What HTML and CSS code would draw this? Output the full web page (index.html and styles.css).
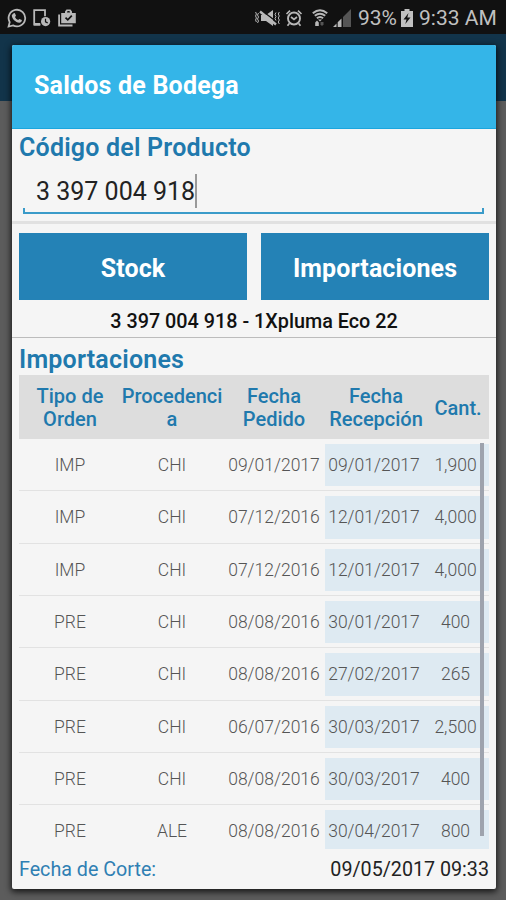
FILE: index.html
```html
<!DOCTYPE html>
<html lang="es">
<head>
    <meta charset="UTF-8">
    <meta name="viewport" content="width=device-width, initial-scale=1.0">
    <title>Saldos de Bodega</title>
    <link rel="stylesheet" href="styles.css">
</head>
<body>
    <div class="status-bar">
        <svg class="icon-whatsapp" width="20" height="20" viewBox="0 0 20 20">
            <path d="M2.7 14.2A8.3 8.3 0 1 1 6 17.4L1.6 18.5Z" fill="none" stroke="#b8b8b8" stroke-width="1.8"/>
            <path d="M6.2 5.4l1.6-.3 1.2 2.7-1 1.2c.7 1.5 1.8 2.5 3.2 3.1l1.1-1.2 2.6 1.2c.1 1.6-1.2 2.6-2.6 2.6-3.8-.3-7.6-4.2-7.5-7.5z" fill="#b8b8b8"/>
        </svg>
        <svg class="icon-device" width="18" height="18" viewBox="0 0 18 18">
            <path d="M7.5 15.5H1.2V1.2H12v6" fill="none" stroke="#b8b8b8" stroke-width="1.8"/>
            <path d="M1 14h6v2.5H1z" fill="#b8b8b8"/>
            <circle cx="12.6" cy="12.6" r="4.6" fill="#b8b8b8"/>
            <path d="M12.5 9.8v3l2.2 1.1" fill="none" stroke="#111" stroke-width="1.2"/>
        </svg>
        <svg class="icon-case" width="18" height="18" viewBox="0 0 18 18">
            <path d="M1.1 5.5v11h13.4" fill="none" stroke="#b8b8b8" stroke-width="1.8"/>
            <path d="M3.2 4H7V2.5l1.5-2h4l1.5 2V4h3.800v10.300H3.200zM9 3.600h3L11.500 2h-2z" fill="#b8b8b8" fill-rule="evenodd"/>
            <path d="M7.5 8.6l2.300 2.300 4-4.200" fill="none" stroke="#111" stroke-width="1.7"/>
        </svg>
        <span class="spacer"></span>
        <svg class="icon-mute" width="26" height="18" viewBox="0 0 26 18">
            <path d="M6 6h5l7-5v16l-7-5H6z" fill="#b8b8b8"/>
            <path d="M8 2.5L20.500 12" stroke="#111" stroke-width="1.5"/>
            <path d="M5 2.5l16 13" stroke="#b8b8b8" stroke-width="2.4"/>
            <path d="M3.5 4l-1 2 1 2-1 2 1 2-1 2M21 3.5l-1 2 1 2-1 2 1 2M24.3 3l-1 2 1 2-1 2 1 2-1 2 1 2M.6 3l.8 2-.8 2 .8 2-.8 2 .8 2" fill="none" stroke="#b8b8b8" stroke-width="1"/>
        </svg>
        <svg class="icon-alarm" width="18" height="18" viewBox="0 0 18 18">
            <circle cx="9" cy="9.5" r="6" fill="none" stroke="#b8b8b8" stroke-width="1.9"/>
            <path d="M1.5 5L5 1.700M16.500 5L13 1.700M4.300 14.500l-1.800 2.300M13.700 14.500l1.800 2.300M6 8l3 2.500L12 8" fill="none" stroke="#b8b8b8" stroke-width="1.7"/>
        </svg>
        <svg class="icon-wifi" width="16" height="18" viewBox="0 0 16 18">
            <path d="M.8 4.300Q8-1.800 15.200 4.300M2.800 6.800Q8 2.600 13.200 6.800M4.900 9.300Q8 6.800 11.100 9.300" fill="none" stroke="#b8b8b8" stroke-width="2"/>
            <path d="M6 10.500h4l-2 2z" fill="#b8b8b8"/>
            <path d="M3.200 17v-3.500l1.800-2 1.800 2V17z" fill="#b8b8b8"/>
            <path d="M8.500 13h3v2.500L10 17l-1.500-1.500z" fill="#555"/>
        </svg>
        <svg class="icon-signal" width="18" height="18" viewBox="0 0 18 18">
            <path d="M10 18V8l8-8v18z" fill="#555"/>
            <path d="M0 18l3.500-3.500V18zM4.700 18v-4.700L8.500 9.500V18z" fill="#b8b8b8"/>
        </svg>
        <span class="battery-level">93%</span>
        <svg class="icon-battery" width="12" height="18" viewBox="0 0 12 18">
            <path d="M3.500 0h5v2H12v16H0V2h3.500z" fill="#c0c0c0"/>
            <path d="M7.500 4l-5 6.500h3L4.300 15l5.200-6.500H6.300z" fill="#111"/>
        </svg>
        <span class="clock">9:33 AM</span>
    </div>
    <div class="app-bar"></div>

    <div class="dialog">
        <h1 class="dialog-title">Saldos de Bodega</h1>
        <div class="search">
            <h2 class="label">Código del Producto</h2>
            <div class="field">
                <span class="field-value">3 397 004 918</span><span class="cursor"></span>
            </div>
        </div>
        <div class="buttons">
            <button>Stock</button>
            <button>Importaciones</button>
        </div>
        <p class="product">3 397 004 918 - 1Xpluma Eco 22</p>
        <h2 class="label section">Importaciones</h2>
        <div class="table-head">
            <span>Tipo de Orden</span>
            <span>Procedencia</span>
            <span>Fecha Pedido</span>
            <span>Fecha Recepción</span>
            <span>Cant.</span>
        </div>
        <div class="list">
            <div class="row"><span>IMP</span><span>CHI</span><span>09/01/2017</span><span class="hl">09/01/2017</span><span class="hl cant">1,900</span></div>
            <div class="row"><span>IMP</span><span>CHI</span><span>07/12/2016</span><span class="hl">12/01/2017</span><span class="hl cant">4,000</span></div>
            <div class="row"><span>IMP</span><span>CHI</span><span>07/12/2016</span><span class="hl">12/01/2017</span><span class="hl cant">4,000</span></div>
            <div class="row"><span>PRE</span><span>CHI</span><span>08/08/2016</span><span class="hl">30/01/2017</span><span class="hl cant">400</span></div>
            <div class="row"><span>PRE</span><span>CHI</span><span>08/08/2016</span><span class="hl">27/02/2017</span><span class="hl cant">265</span></div>
            <div class="row"><span>PRE</span><span>CHI</span><span>06/07/2016</span><span class="hl">30/03/2017</span><span class="hl cant">2,500</span></div>
            <div class="row"><span>PRE</span><span>CHI</span><span>08/08/2016</span><span class="hl">30/03/2017</span><span class="hl cant">400</span></div>
            <div class="row"><span>PRE</span><span>ALE</span><span>08/08/2016</span><span class="hl">30/04/2017</span><span class="hl cant">800</span></div>
            <div class="scrollbar"></div>
        </div>
        <div class="footer">
            <span class="footer-label">Fecha de Corte:</span>
            <span>09/05/2017 09:33</span>
        </div>
    </div>
</body>
</html>
```
FILE: styles.css
```css
* {
    box-sizing: border-box;
}
body {
    margin: 0;
    height: 900px;
    position: relative;
    overflow: hidden;
    background: #5c5c5c;
    font-family: Roboto, sans-serif;
}
h1, h2, p {
    margin: 0;
}
.status-bar {
    height: 34px;
    padding: 2px 9px 0 7px;
    display: flex;
    align-items: center;
    background: #111;
    color: #c0c0c0;
    font-size: 21px;
    white-space: nowrap;
}
.status-bar svg {
    flex: none;
}
.icon-device {
    margin-left: 6px;
}
.icon-case {
    margin-left: 7px;
}
.spacer {
    flex: 1;
}
.icon-alarm {
    margin-left: 4px;
}
.icon-wifi {
    margin-left: 9px;
}
.icon-signal {
    margin-left: 5px;
}
.battery-level {
    width: 39px;
    margin-left: 7px;
}
.icon-battery {
    margin-left: 4px;
}
.clock {
    width: 78px;
    margin-left: 6px;
}
.app-bar {
    height: 67px;
    background: #12344a;
}
.dialog {
    position: absolute;
    top: 45px;
    left: 12px;
    width: 484px;
    height: 844px;
    background: #f5f5f5;
    border-radius: 2px;
    overflow: hidden;
    box-shadow: 0 2px 6px 1px rgba(0, 0, 0, 0.75);
}
.dialog-title {
    height: 84px;
    padding: 0 22px;
    line-height: 81px;
    background: #34b5e8;
    border-bottom: 1px solid #1ba6de;
    color: #fff;
    font-size: 25px;
    font-weight: 700;
    letter-spacing: 0.2px;
}
.search {
    height: 95px;
    padding: 4px 7px 0;
    border-bottom: 3px solid #e1e1e1;
}
.label {
    color: #2079ad;
    font-size: 25px;
    font-weight: 600;
    letter-spacing: 0.2px;
    line-height: 30px;
}
.field {
    height: 43px;
    margin: 8px 5px 0 4px;
    padding-left: 11px;
    display: flex;
    border: solid #3a9bc9;
    border-width: 0 2px 2px;
    border-image: linear-gradient(to bottom, transparent 37px, #3a9bc9 37px) 2;
    color: #222;
    font-size: 25px;
    line-height: 42px;
}
.cursor {
    width: 2px;
    height: 34px;
    margin-top: 3px;
    background: #999;
}
.buttons {
    padding: 9px 7px 0;
    display: grid;
    grid-template-columns: 1fr 1fr;
    gap: 14px;
}
button {
    height: 67px;
    padding: 3px 0 0;
    background: #2482b6;
    border: none;
    border-radius: 0;
    color: #fff;
    font-family: inherit;
    font-size: 25px;
    font-weight: 700;
    letter-spacing: 0.1px;
}
.product {
    height: 38px;
    border-bottom: 1px solid #bcbcbc;
    color: #111;
    font-size: 19.8px;
    font-weight: 500;
    line-height: 43px;
    text-align: center;
}
.section {
    height: 37px;
    padding: 0 7px;
    line-height: 44px;
}
.table-head, .row {
    display: grid;
    grid-template-columns: repeat(4, 102px) 1fr;
    text-align: center;
}
.table-head {
    height: 64px;
    margin: 0 7px;
    padding-top: 2px;
    align-items: center;
    background: #ddd;
    color: #2079ad;
    font-size: 20px;
    font-weight: 500;
    line-height: 23px;
    word-break: break-word;
}
.list {
    position: relative;
    height: 410px;
    margin: 0 7px;
    overflow: hidden;
}
.row {
    height: 52.35px;
    padding: 5px 0 4px;
    border-bottom: 1px solid #e2e2e2;
    color: #555;
    font-size: 17.5px;
    font-weight: 300;
    line-height: 42px;
}
.hl {
    background: #deeaf2;
}
.hl:not(.cant) {
    padding-right: 4px;
}
.cant {
    padding-right: 5px;
}
.scrollbar {
    position: absolute;
    top: 4px;
    right: 5px;
    width: 4px;
    height: 393px;
    background: #9ea3ad;
}
.footer {
    padding: 0 7px;
    display: flex;
    justify-content: space-between;
    color: #222;
    font-size: 19.7px;
    line-height: 41px;
}
.footer-label {
    color: #2f7fb3;
}
```
